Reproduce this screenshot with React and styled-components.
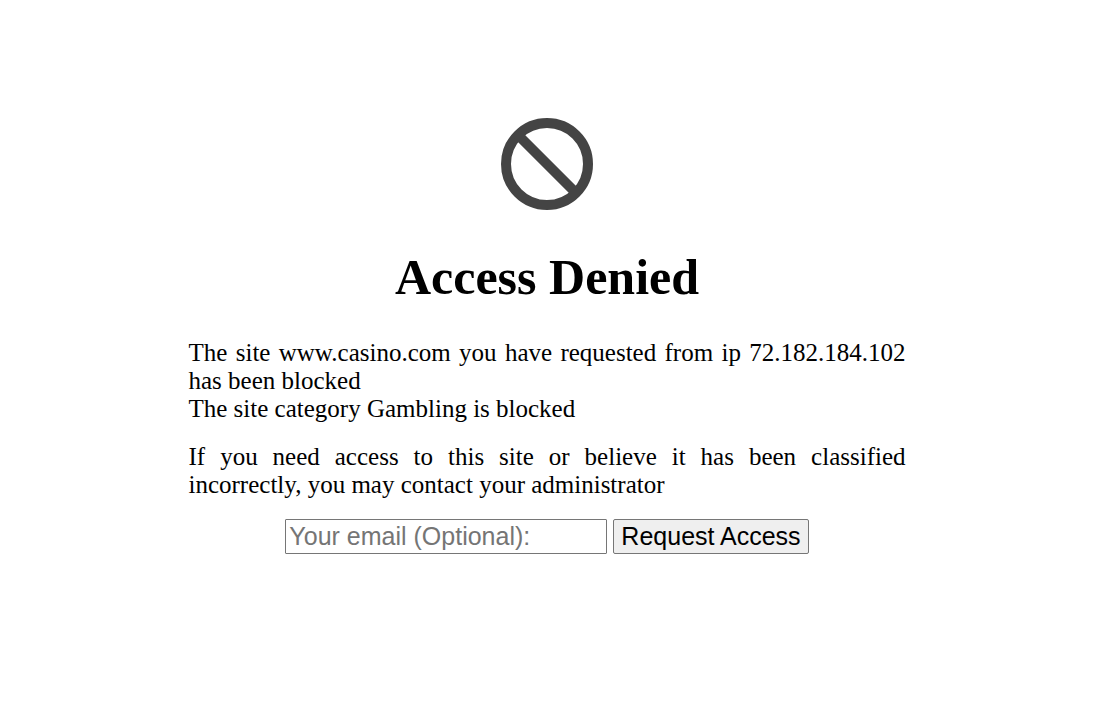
import React from "react";
import styled, { createGlobalStyle } from "styled-components";

const GlobalStyle = createGlobalStyle`
  body {
    margin: 0;
    background: #fff;
    color: #000;
    font-family: "Liberation Serif", "Times New Roman", serif;
    font-size: 25px;
    line-height: 28px;
  }
`;

const Page = styled.main`
  box-sizing: border-box;
  min-height: 100vh;
  padding: 118px 32px 32px 17px;
`;

const Message = styled.article`
  max-width: 717px;
  margin: 0 auto;
  text-align: justify;
`;

const BlockedIcon = styled.svg`
  display: block;
  width: 92px;
  height: 92px;
  margin: 0 auto;
`;

const Title = styled.h1`
  margin: 40px 0 34px;
  font-size: 50px;
  line-height: 55px;
  text-align: center;
`;

const Paragraph = styled.p`
  margin: 0 0 20px;
`;

const RequestForm = styled.form`
  display: flex;
  flex-wrap: wrap;
  justify-content: center;
  gap: 6px;
`;

const EmailField = styled.input`
  box-sizing: border-box;
  width: 322px;
  height: 35px;
  margin: 0;
  padding: 1px 3px;
  border: 1px solid #767676;
  border-radius: 1px;
  background: #fff;
  font-family: "Liberation Sans", Arial, sans-serif;
  font-size: 25px;

  &::placeholder {
    color: #757575;
    opacity: 1;
  }
`;

const SubmitButton = styled.button`
  box-sizing: border-box;
  height: 35px;
  margin: 0;
  padding: 1px 7px;
  border: 1px solid #767676;
  border-radius: 2px;
  background: #efefef;
  color: #000;
  font-family: "Liberation Sans", Arial, sans-serif;
  font-size: 25px;
  white-space: nowrap;
`;

export default function App() {
  return (
    <>
      <GlobalStyle />
      <Page>
        <Message>
          <BlockedIcon viewBox="0 0 92 92" aria-hidden="true">
            <g fill="none" stroke="#444" strokeWidth="10">
              <circle cx="46" cy="46" r="41" />
              <path d="M17 17 75 75" />
            </g>
          </BlockedIcon>
          <Title>Access Denied</Title>
          <Paragraph>
            The site www.casino.com you have requested from ip 72.182.184.102
            has been blocked
            <br />
            The site category Gambling is blocked
          </Paragraph>
          <Paragraph>
            If you need access to this site or believe it has been classified
            incorrectly, you may contact your administrator
          </Paragraph>
          <RequestForm onSubmit={(event) => event.preventDefault()}>
            <EmailField
              type="email"
              name="email"
              aria-label="Your email (Optional)"
              placeholder="Your email (Optional):"
            />
            <SubmitButton type="submit">Request Access</SubmitButton>
          </RequestForm>
        </Message>
      </Page>
    </>
  );
}
